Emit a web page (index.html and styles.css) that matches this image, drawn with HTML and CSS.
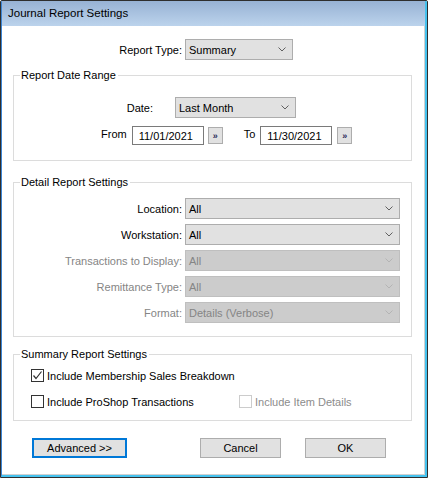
FILE: index.html
```html
<!DOCTYPE html>
<html>
<head>
<meta charset="utf-8">
<title>Journal Report Settings</title>
<link rel="stylesheet" href="styles.css">
</head>
<body>
<div class="window">
  <div class="frame">
    <div class="titlebar">Journal Report Settings</div>
    <div class="client">
      <div class="type-row">
        <span class="lbl">Report Type:</span>
        <div class="combo combo-type"><span class="val">Summary</span><svg class="chev" width="8" height="5" viewBox="0 0 8 5"><polyline points="0.5,0.5 4,4 7.5,0.5" fill="none" stroke="#606060" stroke-width="1"/></svg></div>
      </div>

      <fieldset class="group group-date">
        <legend>Report Date Range</legend>
        <div class="group-body date-body">
          <div class="date-row">
            <span class="lbl">Date:</span>
            <div class="combo combo-date"><span class="val">Last Month</span><svg class="chev" width="8" height="5" viewBox="0 0 8 5"><polyline points="0.5,0.5 4,4 7.5,0.5" fill="none" stroke="#606060" stroke-width="1"/></svg></div>
          </div>
          <div class="range-row">
            <span class="range-lbl from-lbl">From</span>
            <div class="field">11/01/2021</div>
            <div class="pick"><span>»</span></div>
            <span class="range-lbl to-lbl">To</span>
            <div class="field">11/30/2021</div>
            <div class="pick"><span>»</span></div>
          </div>
        </div>
      </fieldset>

      <fieldset class="group group-detail">
        <legend>Detail Report Settings</legend>
        <div class="group-body detail-body">
          <span class="lbl">Location:</span>
          <div class="combo"><span class="val">All</span><svg class="chev" width="8" height="5" viewBox="0 0 8 5"><polyline points="0.5,0.5 4,4 7.5,0.5" fill="none" stroke="#606060" stroke-width="1"/></svg></div>
          <span class="lbl">Workstation:</span>
          <div class="combo"><span class="val">All</span><svg class="chev" width="8" height="5" viewBox="0 0 8 5"><polyline points="0.5,0.5 4,4 7.5,0.5" fill="none" stroke="#606060" stroke-width="1"/></svg></div>
          <span class="lbl disabled">Transactions to Display:</span>
          <div class="combo combo-disabled"><span class="val">All</span><svg class="chev" width="8" height="5" viewBox="0 0 8 5"><polyline points="0.5,0.5 4,4 7.5,0.5" fill="none" stroke="#b4b4b4" stroke-width="1"/></svg></div>
          <span class="lbl disabled">Remittance Type:</span>
          <div class="combo combo-disabled"><span class="val">All</span><svg class="chev" width="8" height="5" viewBox="0 0 8 5"><polyline points="0.5,0.5 4,4 7.5,0.5" fill="none" stroke="#b4b4b4" stroke-width="1"/></svg></div>
          <span class="lbl disabled">Format:</span>
          <div class="combo combo-disabled"><span class="val">Details (Verbose)</span><svg class="chev" width="8" height="5" viewBox="0 0 8 5"><polyline points="0.5,0.5 4,4 7.5,0.5" fill="none" stroke="#b4b4b4" stroke-width="1"/></svg></div>
        </div>
      </fieldset>

      <fieldset class="group group-summary">
        <legend>Summary Report Settings</legend>
        <div class="group-body summary-body">
          <label class="check">
            <span class="box checked"><svg width="11" height="11" viewBox="0 0 11 11"><polyline points="1.5,5.5 4,8.5 9.5,1.5" fill="none" stroke="#333" stroke-width="1.2"/></svg></span>
            <span>Include Membership Sales Breakdown</span>
          </label>
          <span></span>
          <label class="check">
            <span class="box"></span>
            <span>Include ProShop Transactions</span>
          </label>
          <label class="check check-disabled">
            <span class="box"></span>
            <span>Include Item Details</span>
          </label>
        </div>
      </fieldset>

      <div class="buttons">
        <div class="btn btn-default">Advanced &gt;&gt;</div>
        <div class="btn btn-cancel">Cancel</div>
        <div class="btn btn-ok">OK</div>
      </div>
    </div>
  </div>
</div>
</body>
</html>
```
FILE: styles.css
```css
html, body {
  margin: 0;
  padding: 0;
  background: #ffffff;
}

body {
  font-family: "Liberation Sans", Arial, sans-serif;
  font-size: 11px;
  color: #000;
}

.window {
  width: 428px;
  height: 478px;
  box-sizing: border-box;
  border: 1px solid #2e2e2e;
  border-radius: 2px 2px 0 0;
  overflow: hidden;
}

.frame {
  height: 100%;
  box-sizing: border-box;
  border-left: 1px solid #3d86d4;
  border-right: 2px solid #45c2ee;
  border-bottom: 2px solid #45c2ee;
  display: flex;
  flex-direction: column;
}

.titlebar {
  height: 25px;
  line-height: 25px;
  padding-left: 6px;
  font-size: 11.5px;
  background: linear-gradient(#97b2d4, #bcd3ec);
  color: #000;
}

.client {
  flex: 1;
  background: #fff;
  border-right: 1px solid #d0d0d0;
  border-bottom: 1px solid #d0d0d0;
  padding-top: 13px;
  display: flex;
  flex-direction: column;
}

/* generic combo box */
.combo {
  height: 21px;
  box-sizing: border-box;
  border: 1px solid #adadad;
  background: #e1e1e1;
  display: flex;
  align-items: center;
  padding: 0 6px 0 3px;
}
.combo .val {
  flex: 1;
  white-space: nowrap;
}
.combo .chev {
  display: block;
}
.combo-disabled {
  background: #cccccc;
  border-color: #bfbfbf;
  color: #858585;
}

.lbl {
  text-align: right;
  white-space: nowrap;
}
.lbl.disabled {
  color: #858585;
}

/* report type row */
.type-row {
  display: grid;
  grid-template-columns: 180px 108px;
  column-gap: 3px;
  align-items: center;
}

/* group boxes */
.group {
  margin: 0 0 0 11px;
  width: 399px;
  box-sizing: border-box;
  border: 1px solid #dcdcdc;
  padding: 0;
  min-width: 0;
}
.group legend {
  margin-left: 6px;
  padding: 0 2px 0 1px;
  line-height: 13px;
}

.group-date {
  margin-top: 9px;
}
.date-body {
  padding: 15px 0 15px 0;
}
.date-row {
  display: grid;
  grid-template-columns: 139px 121px;
  column-gap: 22px;
  align-items: center;
}
.range-row {
  margin-top: 8px;
  display: flex;
  align-items: center;
  padding-left: 87px;
}
.range-lbl {
  position: relative;
  top: -2px;
}
.field {
  width: 72px;
  height: 19px;
  box-sizing: border-box;
  border: 1px solid #7a7a7a;
  background: #fff;
  padding: 2px 0 0 6px;
  line-height: 14px;
  margin-left: 5px;
}
.pick {
  width: 15px;
  height: 17px;
  box-sizing: border-box;
  border: 1px solid #adadad;
  background: #e1e1e1;
  margin-left: 4px;
  display: flex;
  align-items: center;
  justify-content: center;
  font-size: 9px;
  font-weight: bold;
  color: #2a2a5a;
  padding-top: 1px;
}
.to-lbl {
  margin-left: 21px;
}
.range-row .pick:last-child {
  margin-left: 5px;
}

.group-detail {
  margin-top: 15px;
}
.detail-body {
  padding: 9px 0 13px 0;
  display: grid;
  grid-template-columns: 168px 215px;
  column-gap: 3px;
  row-gap: 5px;
  align-items: center;
}

.group-summary {
  margin-top: 11px;
}
.summary-body {
  padding: 8px 0 12px 17px;
  display: grid;
  grid-template-columns: 208px auto;
  row-gap: 13px;
}
.check {
  display: flex;
  align-items: center;
  height: 13px;
  white-space: nowrap;
}
.box {
  width: 13px;
  height: 13px;
  box-sizing: border-box;
  border: 1px solid #333;
  background: #fff;
  margin-right: 3px;
  display: flex;
  align-items: center;
  justify-content: center;
  flex: none;
}
.check-disabled {
  color: #8c8c8c;
}
.check-disabled .box {
  border-color: #cccccc;
}

/* buttons */
.buttons {
  margin-top: 17px;
  display: flex;
  padding-left: 30px;
}
.btn {
  height: 20px;
  box-sizing: border-box;
  border: 1px solid #adadad;
  background: #e1e1e1;
  display: flex;
  align-items: center;
  justify-content: center;
}
.btn-default {
  width: 95px;
  border: 2px solid #0078d7;
}
.btn-cancel {
  width: 81px;
  margin-left: 73px;
}
.btn-ok {
  width: 81px;
  margin-left: 24px;
}
```
